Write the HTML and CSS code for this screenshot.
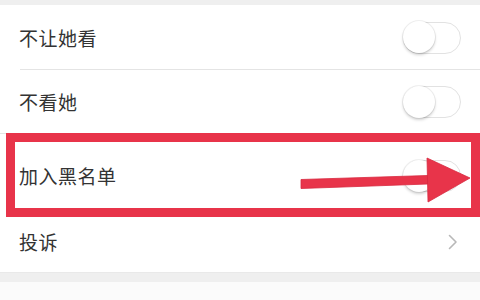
FILE: index.html
```html
<!DOCTYPE html>
<html lang="zh">
<head>
<meta charset="utf-8">
<link rel="stylesheet" href="styles.css">
</head>
<body>
<div class="page">
  <div class="band top"></div>
  <div class="list">
    <div class="row r1 sep-inset">
      <span class="label">不让她看</span>
      <span class="toggle"><span class="knob"></span></span>
    </div>
    <div class="row r2 sep-full">
      <span class="label">不看她</span>
      <span class="toggle"><span class="knob"></span></span>
    </div>
    <div class="row r3">
      <span class="label">加入黑名单</span>
      <span class="toggle"><span class="knob"></span></span>
    </div>
    <div class="row r4">
      <span class="label">投诉</span>
      <svg class="chev" width="10" height="16" viewBox="0 0 10 16"><path d="M1.5 1.5 L8 8 L1.5 14.5" fill="none" stroke="#b8b8b8" stroke-width="1.6" stroke-linecap="round" stroke-linejoin="round"/></svg>
    </div>
  </div>
  <div class="band bottom"></div>
  <div class="foot"></div>

  <div class="highlight"></div>
  <svg class="arrow" width="480" height="300" viewBox="0 0 480 300">
    <polygon points="301,179.5 428,175.5 428,184 301,188.5" fill="#e8344a" stroke="#d82a40" stroke-width="0.8"/>
    <polygon points="427,158 470,178 428,202" fill="#e8344a" stroke="#d82a40" stroke-width="0.8" stroke-linejoin="round"/>
  </svg>
</div>
</body>
</html>
```
FILE: styles.css
```css
html, body {
  margin: 0;
  padding: 0;
  background: #ffffff;
}
.page {
  position: relative;
  width: 480px;
  height: 300px;
  overflow: hidden;
  font-family: "Noto Sans CJK SC", "Noto Sans", sans-serif;
  color: #333333;
}
.band {
  background: #efefef;
}
.band.top {
  height: 5px;
}
.band.bottom {
  height: 10px;
  border-top: 1px solid #e9e9e9;
  box-sizing: border-box;
}
.foot {
  height: 18px;
  background: #fbfbfb;
}
.list {
  display: flex;
  flex-direction: column;
  background: #ffffff;
}
.row {
  display: flex;
  align-items: center;
  justify-content: space-between;
  padding: 0 19px 0 19px;
  position: relative;
  box-sizing: border-box;
}
.r1 { height: 65px; }
.r2 { height: 64px; }
.r3 { height: 84px; }
.r4 { height: 54px; padding-bottom: 6px; padding-right: 22px; }
.sep-inset::after {
  content: "";
  position: absolute;
  left: 20px;
  right: 0;
  bottom: 0;
  height: 1px;
  background: #e4e4e4;
}
.sep-full::after {
  content: "";
  position: absolute;
  left: 0;
  right: 0;
  bottom: 0;
  height: 1px;
  background: #e4e4e4;
}
.label {
  font-size: 19px;
  line-height: 24px;
  letter-spacing: 0.5px;
}
.toggle {
  width: 58px;
  height: 32px;
  border-radius: 16px;
  border: 1.5px solid #e2e2e2;
  box-sizing: border-box;
  position: relative;
  background: #ffffff;
}
.knob {
  position: absolute;
  left: -1.5px;
  top: -1.5px;
  width: 32px;
  height: 32px;
  border-radius: 50%;
  background: #ffffff;
  box-shadow: 0 2px 3px rgba(0,0,0,0.18), 0 0 0 1px rgba(0,0,0,0.06);
}
.chev {
  display: block;
}
.highlight {
  position: absolute;
  left: 6px;
  top: 133px;
  width: 474px;
  height: 84px;
  border: 9px solid #e8344a;
  box-sizing: border-box;
}
.arrow {
  position: absolute;
  left: 0;
  top: 0;
}
```
